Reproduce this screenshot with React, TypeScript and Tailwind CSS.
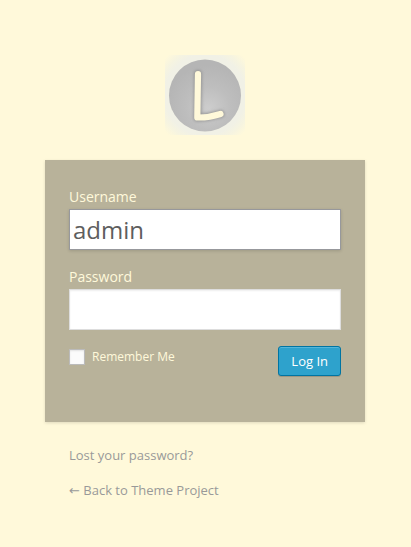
import React from "react";

function Logo() {
  return (
    <svg viewBox="0 0 80 80" className="block size-20" role="img" aria-label="Site logo">
      <defs>
        <radialGradient id="halo" cx="0.5" cy="0.5" r="0.68">
          <stop offset="0.74" stopColor="#f1f1e6" />
          <stop offset="0.86" stopColor="#f6f4e0" />
          <stop offset="1" stopColor="#fff9da" />
        </radialGradient>
        <radialGradient id="disc" cx="0.55" cy="0.68" r="0.6">
          <stop offset="0" stopColor="#cdcdcd" />
          <stop offset="0.5" stopColor="#bebebe" />
          <stop offset="1" stopColor="#b5b5b5" />
        </radialGradient>
        <filter id="soft" x="-50%" y="-50%" width="200%" height="200%">
          <feGaussianBlur stdDeviation="1.8" />
        </filter>
      </defs>
      <rect width="80" height="80" fill="url(#halo)" />
      <circle cx="40" cy="40.500" r="36" fill="url(#disc)" />
      <path
        d="M33 19 L32.500 62.500 Q44 62.500 55.500 59"
        fill="none"
        stroke="#8a8a8a"
        strokeOpacity="0.75"
        strokeWidth="8"
        strokeLinecap="round"
        strokeLinejoin="round"
        filter="url(#soft)"
      />
      <path
        d="M33 19 L32.300 62.500 Q44 62.800 55.500 59"
        fill="none"
        stroke="#fff9da"
        strokeWidth="6.200"
        strokeLinecap="round"
        strokeLinejoin="round"
      />
    </svg>
  );
}

export default function App() {
  return (
    <main className="min-h-screen bg-[#fff9da] pr-px pt-[55px] pb-12 font-['Open_Sans',sans-serif]">
      <div className="mx-auto w-full max-w-[320px]">
        <h1 className="flex justify-center">
          <Logo />
        </h1>

        <form
          className="mt-[25px] bg-[#b8b29a] px-6 pt-[26px] pb-[46px] text-[#fff9da] shadow-[0_1px_3px_rgba(0,0,0,0.13)]"
          onSubmit={(e) => e.preventDefault()}
        >
          <label htmlFor="username" className="block pb-[2px] text-sm leading-[21px]">
            Username
          </label>
          <input
            id="username"
            type="text"
            defaultValue="admin"
            className="block h-[41px] w-full border border-[#97989c] bg-white px-[3px] text-2xl text-[#5e5e5e] shadow-[0_1px_3px_rgba(0,0,0,0.15)] outline-none"
          />

          <label htmlFor="password" className="mt-4 block pb-[2px] text-sm leading-[21px]">
            Password
          </label>
          <input
            id="password"
            type="password"
            className="block h-[41px] w-full border border-[#ddd] bg-white px-[3px] text-2xl text-[#5e5e5e] shadow-[inset_0_1px_2px_rgba(0,0,0,0.07)] outline-none"
          />

          <div className="mt-4 flex items-start justify-between">
            <label htmlFor="remember" className="flex items-center gap-[7px] pt-[2px] text-xs leading-[18px]">
              <input
                id="remember"
                type="checkbox"
                className="size-4 appearance-none border border-[#bbb] bg-[#fbfbfb] shadow-[inset_0_1px_2px_rgba(0,0,0,0.1)] checked:bg-[#2ea2cc]"
              />
              Remember Me
            </label>
            <button
              type="submit"
              className="h-[30px] rounded-[3px] border border-[#0074a2] bg-[#2ea2cc] px-3 text-[13px] leading-7 font-medium text-white shadow-[inset_0_1px_0_rgba(120,200,230,0.5),0_1px_0_rgba(0,0,0,0.15)]"
            >
              Log In
            </button>
          </div>
        </form>

        <nav className="mt-6 flex flex-col items-start gap-4 px-6 text-[13px] leading-[19px] text-[#999]">
          <a href="#lost-password">Lost your password?</a>
          <a href="#home">
            <span className="font-['DejaVu_Sans',sans-serif]">←</span> Back to Theme Project
          </a>
        </nav>
      </div>
    </main>
  );
}
